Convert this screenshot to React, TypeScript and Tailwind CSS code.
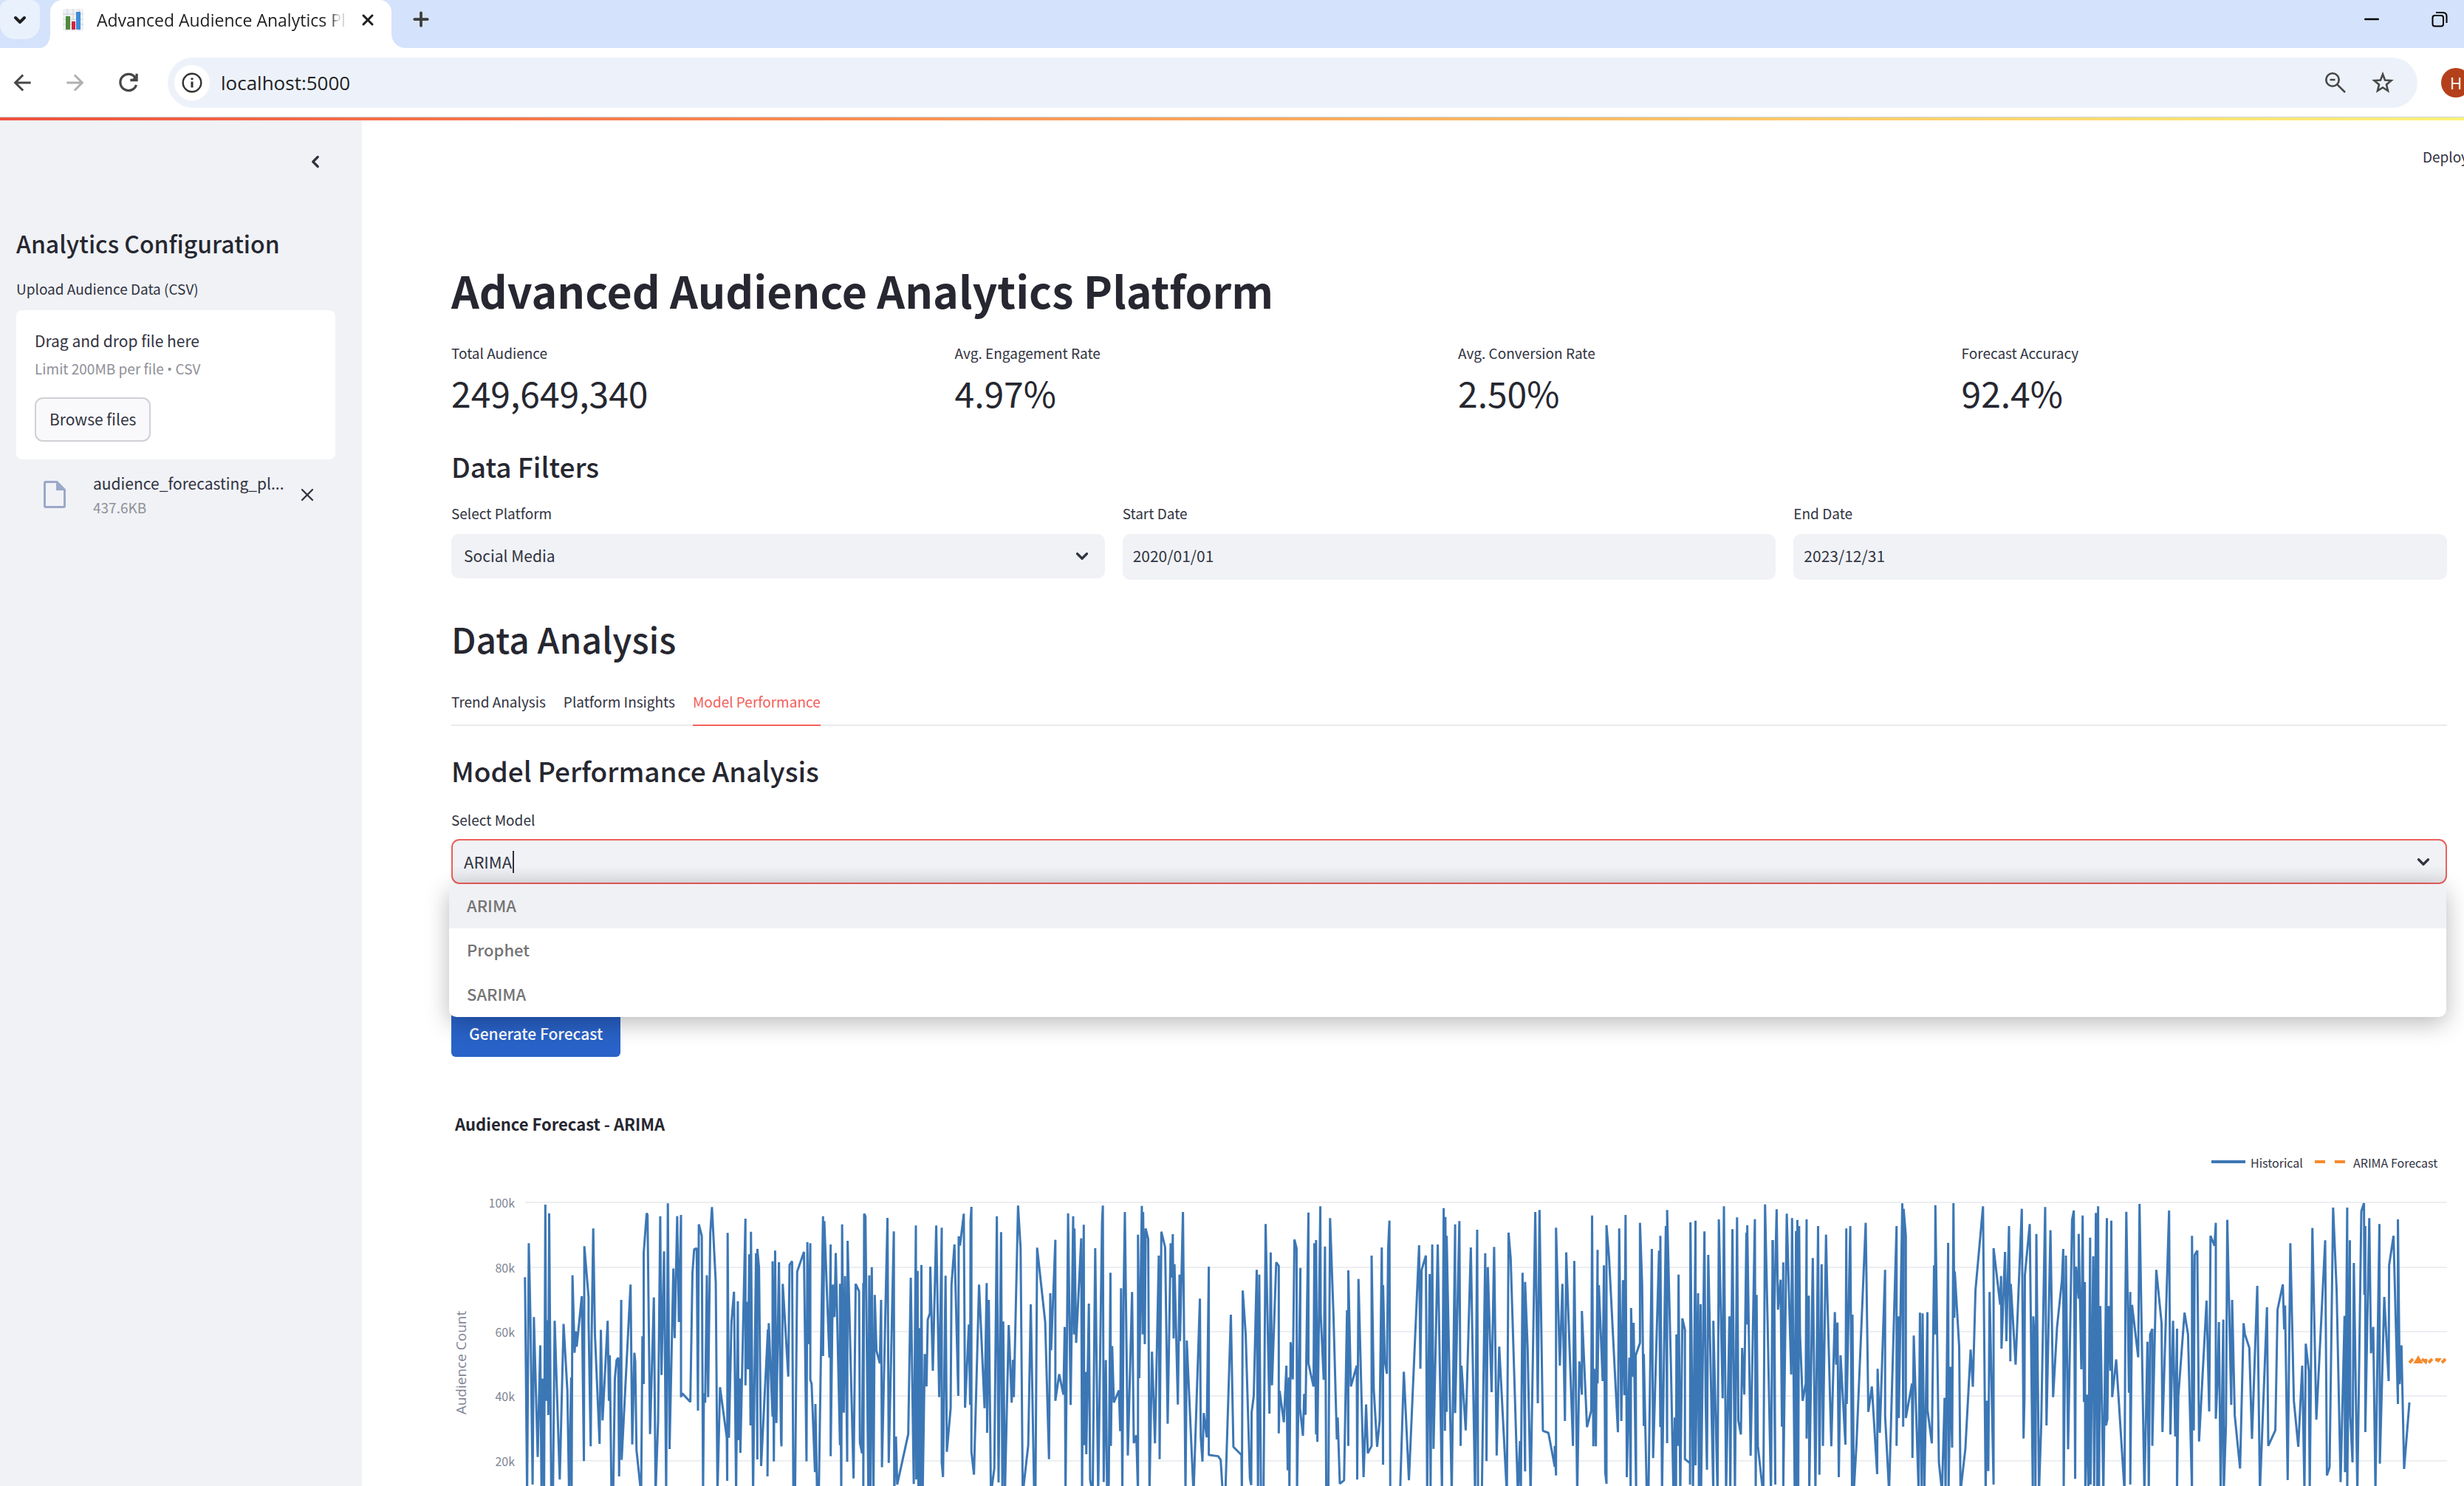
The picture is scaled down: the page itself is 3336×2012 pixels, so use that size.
import { useState } from "react";
import { ChevronDown, ChevronLeft, X, Plus, Minus } from "lucide-react";

const UI = "font-['Noto_Sans_CJK_SC',sans-serif]";
const CHROME = "font-['Open_Sans',sans-serif]";

const LABEL = "block text-[19px] leading-[28px] text-[#31333f]";

type Segment = { x: number; y: number; sx: number; points: string };

/* Historical series, digitised in three stretches with their own sample scale. */
const SEGMENTS: Segment[] = [
  {
    x: -11,
    y: -10,
    sx: 0.574,
    points:
      "193,718 198,1600 202,580 206,900 211,1560 214,880 223,1448 229,995 232,1600 234,1130 238,1600 241,423 243,1220 246,893 248,1278 250,458 255,1600 259,1600 263,895 275,1540 284,908 293,1180 297,1600 302,1125 303,1600 305,710 310,1025 313,938 315,1000 327,795 332,1465 333,592 343,800 343,900 348,1405 350,980 354,520 358,950 369,1395 372,932 376,1300 388,895 391,1220 393,1035 397,1600 401,1600 405,1130 409,1055 413,1045 415,1527 420,810 421,1460 442,748 446,1397 451,1025 453,1060 456,1420 467,1600 470,958 473,1152 473,620 480,458 482,465 488,1355 497,800 501,1600 507,1300 512,470 515,1115 521,613 526,1600 530,418 534,1416 543,683 546,965 552,470 556,900 561,465 561,1205 564,1190 583,1225 588,700 592,605 598,600 601,1260 603,503 610,550 613,1600 615,1190 618,1228 622,710 625,1205 630,540 634,433 643,740 647,1600 653,1165 669,1370 670,1545 671,538 674,1370 680,900 686,777 691,1600 695,815 697,1380 700,1130 701,1432 713,480 713,1157 716,818 719,1092 722,625 725,1320 726,533 731,1600 738,620 741,1458 741,603 745,680 750,1485 766,930 765,1527 768,905 777,1285 777,653 780,1466 783,610 786,1310 792,657 797,1380 798,1405 801,745 814,1122 817,668 823,653 826,1600 830,1600 835,695 851,615 857,1466 859,575 862,990 866,580 866,1135 869,1150 877,1510 878,1233 882,1600 886,1600 896,470 896,1038 899,490 911,1045 914,585 914,1445 919,748 923,880 926,620 936,1400 936,745 939,1600 941,503 945,1268 948,713 953,1468 954,570 968,1535 973,745 981,775 983,1390 988,1433 991,742 991,1600 993,460 996,470 1003,1600 1005,710 1008,1600 1011,677 1015,1600 1018,790 1022,1016 1030,1068 1033,810 1035,1490 1048,477 1051,1472 1063,532 1064,1600 1068,1365 1071,1560 1097,1355 1103,720 1110,1558 1115,508 1116,1540 1119,692 1121,1600 1124,925 1126,1600 1128,668 1131,1600 1136,1030 1140,1162 1143,890 1148,865 1149,675 1155,1098 1163,508 1170,1205 1176,517 1176,1470 1179,1530 1185,712 1188,1427 1197,1250 1199,750 1206,585 1215,1200 1216,552 1219,590 1228,460 1231,1248 1240,910 1243,1237 1244,490 1246,432 1246,1427 1252,1520 1264,748 1277,1250 1282,742 1283,1350 1287,810 1292,1600 1300,1495 1306,470 1310,1552 1316,535 1319,1600 1321,898 1325,1600 1334,912 1341,1228 1344,1053 1346,1205 1356,427 1362,600 1367,1600 1380,1400 1386,828 1394,1600 1397,1600 1401,598 1420,900 1429,1457 1432,783 1434,1015 1444,566 1444,1220 1453,1112 1463,1195 1466,920 1468,1600 1474,458 1480,1237 1486,470 1488,950 1489,520 1493,985 1505,560 1507,1600 1511,505 1512,1400 1515,1103 1517,1437 1523,825 1526,1540 1532,1600 1538,600 1545,1600 1554,500 1556,427 1558,1550 1563,1055 1566,1600",
  },
  {
    x: 889,
    y: 90,
    sx: 0.574,
    points:
      "0,1300 2,1255 6,400 7,1103 10,698 14,927 26,878 29,1043 31,463 34,1300 37,500 40,153 47,1142 57,478 61,1092 67,1060 71,1300 71,245 74,828 80,128 82,650 83,153 87,690 89,220 95,262 98,1300 104,720 111,1093 120,330 122,1157 126,233 135,297 141,1013 148,280 151,420 153,243 155,667 157,365 165,935 169,407 170,677 177,153 183,1300 186,675 202,1300 217,505 219,1068 223,1167 226,970 233,1068 238,375 238,1140 260,1145 266,1160 271,1300 277,1300 290,570 296,1107 315,1140 316,1300 318,472 325,650 335,1235 338,1262 339,967 344,900 351,388 354,1300 357,407 361,1300 367,1300 372,202 381,972 384,317 387,857 397,357 403,372 403,1052 405,880 415,1007 421,777 424,1202 427,825 428,1300 431,682 436,833 440,265 445,300 446,1300 454,380 453,950 460,1062 463,892 466,977 473,155 473,768 485,862 487,280 491,1057 491,267 494,1087 501,130 502,570 509,835 512,293 515,1300 520,1300 524,178 532,570 540,1077 542,988 547,1257 557,1243 564,552 567,1103 567,390 573,862 587,777 588,1240 591,425 603,1230 609,935 613,1133 622,1103 622,330 627,870 635,1107 641,1000 646,297 649,1180 649,450 653,755 658,810 661,303 664,188 666,1300 689,1300 698,802 710,1243 734,288 737,790 740,388 750,330 753,1300 759,405 761,1300 765,285 768,1115 778,285 788,1300 792,137 795,1042 796,173 799,965 799,250 811,1300 819,203 819,970 829,190 832,1103 834,777 844,1040 856,297 866,1300 871,225 873,1300 882,1300 890,320 893,1165 896,377 905,885 911,295 917,1142 923,700 941,1300 945,237 950,340 967,1300 972,1083 974,1300 978,400 984,1207 984,437 990,707 997,1300 1008,153 1014,930 1018,145 1026,1042 1039,1050 1054,1188 1054,1103 1057,1223 1057,217 1066,777 1072,445 1078,1002 1081,317 1097,1103 1100,352 1107,1300 1112,760 1118,895 1118,555 1130,1027 1140,960 1142,167 1145,1105 1147,790 1151,1105 1155,307 1155,850 1158,450 1167,840 1170,370 1173,1210 1176,1257 1176,207 1182,337 1203,1048 1206,220 1211,1002 1215,430 1218,897 1221,165 1224,1230 1230,745 1233,1300 1234,543 1238,823 1240,603 1246,1300 1245,735 1255,685 1255,197 1260,443 1264,1022 1264,730 1271,1300 1275,1300 1283,303 1286,1153 1300,310 1303,1027 1303,250 1307,1300 1316,210 1319,1092 1319,145 1328,780 1334,1300 1337,988 1340,1300 1341,650 1344,1103 1346,407 1350,1300 1355,585 1361,632 1361,1157 1373,1173 1373,1260 1374,195 1380,1300 1386,188 1386,1182 1392,483 1394,1300 1398,527 1399,1300 1407,232 1410,937 1413,1200 1416,327 1428,1300 1428,595 1438,1300 1441,183 1450,910 1453,130 1458,1300 1466,577 1468,1300 1473,223 1479,1300 1484,175 1487,1000 1493,1057 1496,705 1501,895 1506,237 1508,610 1508,207 1516,1143 1526,182 1528,1300 1530,490 1533,1103 1543,1260 1546,1300 1550,122 1556,600 1564,1300 1568,267",
  },
  {
    x: 1789,
    y: 40,
    sx: 0.597,
    points:
      "0,417 6,1410 4,685 9,292 12,700 18,578 21,1175 24,508 24,1440 32,310 42,963 44,328 50,1440 53,380 55,1440 56,335 58,1440 60,360 62,800 68,1070 75,1000 77,333 77,1223 82,643 83,1440 91,490 97,1440 103,360 106,1370 111,515 114,1253 121,395 124,640 133,1255 141,710 144,923 147,752 150,1380 154,885 165,1248 167,370 168,1083 176,360 180,1440 181,720 184,1440 190,1250 211,347 217,1115 225,1012 237,1368 238,940 243,1200 255,538 255,1130 264,1440 281,360 281,1253 285,727 286,1140 294,268 296,1175 297,290 302,400 302,1140 316,1000 317,1302 320,805 331,1440 334,712 338,1440 340,715 344,1440 351,710 351,1105 361,1243 366,520 368,800 369,275 377,1320 384,1440 390,1058 392,1440 398,428 399,1440 403,932 407,1260 410,267 412,733 413,545 423,850 426,1440 437,1265 449,862 454,1013 460,620 477,280 483,1440 486,1070 489,1355 492,628 501,1410 501,450 516,680 518,563 519,858 527,465 530,828 536,360 539,910 540,595 551,923 565,290 569,1223 571,1063 572,560 583,352 590,1440 591,727 594,822 596,1440 598,392 604,1440 609,1170 618,283 621,1170 630,377 636,1055 645,770 656,580 659,453 660,1440 665,480 670,1267 679,335 683,297 686,1387 688,525 694,655 694,392 700,942 703,317 706,1075 708,587 709,1440 713,1045 716,1440 720,407 721,1410 727,483 729,1440 733,307 736,1440 738,280 740,1440 743,685 750,1440 758,328 756,1170 759,1145 762,685 766,948 768,338 770,1055 779,902 798,1440 800,663 802,302 805,640 808,1037 811,628 811,1410 815,680 829,893 832,270 843,1440 850,830 853,1440 856,800 861,778 861,1253 870,538 882,755 884,1197 899,297 902,1207 908,745 913,1215 917,777 917,1440 920,1050 934,712 942,800 951,1440 951,400 955,1190 957,478 963,460 967,1235 984,663 990,1113 993,400 1002,440 1005,347 1005,1143 1009,985 1012,750 1016,1440 1022,740 1023,1440 1028,1167 1031,335 1040,1087 1042,660 1048,1130 1060,1345 1068,755 1071,800 1081,855 1087,1225 1099,603 1105,1440 1121,690 1124,1253 1140,1190 1145,700 1157,597 1160,780 1162,683 1168,1392 1174,430 1182,1070 1192,1257 1201,927 1206,1440 1209,838 1216,950 1218,1440 1224,368 1233,1147 1253,418 1257,1373 1263,1340 1271,285 1279,620 1288,1400 1297,725 1298,1360 1303,285 1303,1440 1309,418 1310,1130 1315,1320 1318,510 1326,1440 1335,300 1341,267 1342,640 1344,360 1344,1197 1353,328 1357,877 1362,770 1367,1440 1376,352 1377,1325 1387,648 1397,990 1398,520 1408,400 1418,1083 1418,333 1422,1003 1426,845 1432,1347 1444,1077",
  },
];

const TICKS = [
  { label: "100k", y: 128 },
  { label: "80k", y: 216 },
  { label: "60k", y: 303 },
  { label: "40k", y: 390 },
  { label: "20k", y: 478 },
  { label: "0", y: 565 },
];

const METRICS = [
  { label: "Total Audience", value: "249,649,340" },
  { label: "Avg. Engagement Rate", value: "4.97%" },
  { label: "Avg. Conversion Rate", value: "2.50%" },
  { label: "Forecast Accuracy", value: "92.4%" },
];

const TABS = ["Trend Analysis", "Platform Insights", "Model Performance"];
const MODELS = ["ARIMA", "Prophet", "SARIMA"];

function BrowserTabs() {
  return (
    <div className="flex h-[65px] items-start bg-[#d5e2fb]">
      <button
        aria-label="Search tabs"
        className="flex h-[53px] w-[54px] shrink-0 items-center justify-center rounded-b-[20px] rounded-t-[12px] bg-[#e9f1fd] text-[#1f1f1f]"
      >
        <ChevronDown size={24} strokeWidth={4} />
      </button>
      <div className="flex h-[65px] w-[14px] shrink-0 flex-col justify-end">
        <svg viewBox="0 0 20 20" className="h-5 w-full" preserveAspectRatio="none">
          <path d="M20 0V20H0C12 20 20 12 20 0Z" fill="#fff" />
        </svg>
      </div>
      <div className="flex h-[65px] w-[462px] shrink-0 items-center rounded-t-[16px] bg-white pb-3 pl-[17px] pr-[20px]">
        <svg viewBox="0 0 28 30" className="h-[30px] w-[28px] shrink-0">
          <rect x="0" y="0" width="28" height="30" rx="2" fill="#eef1f4" />
          <path d="M0 7H28M0 14H28M0 21H28M6 0V30M14 0V30M22 0V30" stroke="#ccd3da" strokeWidth="1" />
          <rect x="4" y="10" width="6" height="18" fill="#4f8a3c" />
          <rect x="12" y="17" width="5" height="11" fill="#d3263f" />
          <rect x="18" y="4" width="6" height="24" fill="#3f8cd9" />
        </svg>
        <span
          className={`ml-[18px] flex-1 overflow-hidden whitespace-nowrap bg-gradient-to-r from-[#1f1f1f] from-94% to-[#1f1f1f]/20 to-97% bg-clip-text text-[23px] leading-[32px] text-transparent ${CHROME}`}
        >
          Advanced Audience Analytics Platform
        </span>
        <button aria-label="Close tab" className="ml-[18px] shrink-0 text-[#1f1f1f]">
          <X size={24} strokeWidth={3} />
        </button>
      </div>
      <svg viewBox="0 0 20 20" className="mt-[45px] h-5 w-5 shrink-0">
        <path d="M0 0V20H20C8 20 0 12 0 0Z" fill="#fff" />
      </svg>
      <button aria-label="New tab" className="ml-1 flex h-[52px] w-[32px] shrink-0 items-center justify-center text-[#3c3c3c]">
        <Plus size={30} strokeWidth={3} />
      </button>
      <div className="ml-auto flex h-[52px] shrink-0 items-center gap-[66px] pr-[22px] text-black">
        <button aria-label="Minimize">
          <Minus size={30} strokeWidth={2} />
        </button>
        <button aria-label="Restore">
          <svg viewBox="0 0 22 22" className="h-[22px] w-[22px]" fill="none" stroke="currentColor" strokeWidth="2">
            <rect x="1.500" y="6" width="14.500" height="14.500" rx="3" />
            <path d="M6 2H15C18.500 2 20.500 4 20.500 7V16" />
          </svg>
        </button>
      </div>
    </div>
  );
}

function AddressBar() {
  return (
    <div className="flex h-[93px] items-center overflow-hidden bg-white pl-[16px]">
      <button aria-label="Back" className="shrink-0 text-[#474747]">
        <svg viewBox="0 0 24 24" className="h-[28px] w-[28px]" fill="none" stroke="currentColor" strokeWidth="2.600">
          <path d="M22 12H4M13 3L4 12L13 21" />
        </svg>
      </button>
      <button aria-label="Forward" className="ml-[44px] shrink-0 text-[#b0b0b0]">
        <svg viewBox="0 0 24 24" className="h-[28px] w-[28px]" fill="none" stroke="currentColor" strokeWidth="2.600">
          <path d="M2 12H20M11 3L20 12L11 21" />
        </svg>
      </button>
      <button aria-label="Reload" className="ml-[44px] shrink-0 text-[#474747]">
        <svg viewBox="0 0 24 24" className="h-[28px] w-[28px]" fill="none" stroke="currentColor" strokeWidth="2.800">
          <path d="M20 6.500A9.500 9.500 0 1 0 21 14.500" />
          <path d="M21.500 1.500V9H14" />
          <path d="M21 4L16.500 8.500H21Z" fill="currentColor" strokeWidth="1" />
        </svg>
      </button>
      <div className="ml-[39px] flex h-[68px] min-w-0 flex-1 items-center rounded-full bg-[#edf2fa] pl-[9px] pr-[32px]">
        <button
          aria-label="View site information"
          className="flex h-[48px] w-[48px] shrink-0 items-center justify-center rounded-full bg-white text-[#333]"
        >
          <svg viewBox="0 0 28 28" className="h-[28px] w-[28px]" fill="none" stroke="currentColor">
            <circle cx="14" cy="14" r="12.300" strokeWidth="2.400" />
            <path d="M14 12.500V20.500M14 7.500V10" strokeWidth="3" />
          </svg>
        </button>
        <input
          aria-label="Address"
          defaultValue="localhost:5000"
          className={`ml-[15px] min-w-0 flex-1 bg-transparent text-[26px] leading-[36px] text-[#1f1f1f] outline-none ${CHROME}`}
        />
        <button aria-label="Zoom" className="shrink-0 text-[#474747]">
          <svg viewBox="0 0 28 28" className="h-[28px] w-[28px]" fill="none" stroke="currentColor" strokeWidth="2.600">
            <circle cx="10" cy="10" r="8.700" />
            <path d="M16.300 16.300L27 27M6.500 10H13.500" />
          </svg>
        </button>
        <button aria-label="Bookmark this tab" className="ml-[35px] shrink-0 text-[#474747]">
          <svg viewBox="0 0 30 30" className="h-[30px] w-[30px]" fill="none" stroke="currentColor" strokeWidth="2.600">
            <path d="M15 3.500L18 11.500L26.500 12L20 17.500L22 26L15 21.500L8 26L10 17.500L3.500 12L12 11.500Z" />
          </svg>
        </button>
      </div>
      <button
        className={`-mr-[9px] ml-[32px] flex h-[40px] w-[40px] shrink-0 items-center justify-center rounded-full bg-[#b3401b] text-[22px] leading-[40px] text-white ${CHROME}`}
      >
        H
      </button>
    </div>
  );
}

function Sidebar() {
  return (
    <aside className="w-[490px] shrink-0 bg-[#f0f2f6] pl-[22px] pr-[36px]">
      <div className="flex h-[112px] items-center justify-end pr-[14px]">
        <button aria-label="Collapse sidebar" className="text-[#31333f]">
          <ChevronLeft size={26} strokeWidth={3} />
        </button>
      </div>
      <h2 className="mt-[34px] whitespace-nowrap text-[32px] font-medium leading-[40px] text-[#262730]">
        Analytics Configuration
      </h2>
      <label htmlFor="upload" className={`mt-[28px] ${LABEL}`}>
        Upload Audience Data (CSV)
      </label>
      <section className="mt-[15px] rounded-[8px] bg-white px-[25px] pb-[24px] pt-[25px]">
        <p className="text-[21px] leading-[32px] text-[#31333f]">Drag and drop file here</p>
        <p className="mt-2 text-[19px] leading-[28px] text-[#8f9098]">
          Limit 200MB per file <span className={CHROME}>•</span> CSV
        </p>
        <button
          id="upload"
          className="mt-[24px] h-[60px] rounded-[11px] border-2 border-[#d0d1d5] bg-[#f9f9fb] px-[18px] pb-[2px] text-[21px] leading-[32px] text-[#31333f]"
        >
          Browse files
        </button>
      </section>
      <div className="mt-[16px] flex items-center pl-[37px]">
        <svg viewBox="0 0 30 37" className="h-[37px] w-[30px] shrink-0">
          <path d="M3 1.500H18L28.500 12V34Q28.500 35.500 27 35.500H3Q1.500 35.500 1.500 34V3Q1.500 1.500 3 1.500Z" fill="none" stroke="#9ba8c9" strokeWidth="3" />
          <path d="M17 1L29 13H17Z" fill="#9ba8c9" />
        </svg>
        <div className="ml-[37px] min-w-0 flex-1">
          <p className="whitespace-nowrap text-[21px] leading-[32px] text-[#31333f]">audience_forecasting_pl...</p>
          <p className="mt-[3px] text-[19px] leading-[28px] text-[#8f9098]">437.6KB</p>
        </div>
        <button aria-label="Remove file" className="ml-[6px] mr-[24px] shrink-0 text-[#31333f]">
          <X size={28} strokeWidth={2} />
        </button>
      </div>
    </aside>
  );
}

function ForecastChart() {
  return (
    <svg viewBox="0 0 2702 575" className={`mt-[69px] block w-full ${UI}`} role="img" aria-label="Audience Forecast - ARIMA">
      <text x="5" y="31" className="fill-[#262730] text-[22px] font-bold">
        Audience Forecast - ARIMA
      </text>
      <path d="M2383 73H2429" stroke="#3c77b5" strokeWidth="4" />
      <text x="2436" y="81" className="fill-[#31333f] text-[16px]">
        Historical
      </text>
      <path d="M2523 73H2565" stroke="#f58a2c" strokeWidth="4" strokeDasharray="14 13" />
      <text x="2575" y="81" className="fill-[#31333f] text-[16px]">
        ARIMA Forecast
      </text>
      {TICKS.map((t) => (
        <g key={t.label}>
          <path d={`M100 ${t.y}H2702`} stroke="#eceef2" strokeWidth="2" />
          <text x="86" y={t.y + 7} textAnchor="end" className="fill-[#808495] text-[16px]">
            {t.label}
          </text>
        </g>
      ))}
      <text
        x="0"
        y="0"
        transform="translate(20 345) rotate(-90)"
        textAnchor="middle"
        className="fill-[#808495] font-['Open_Sans',sans-serif] text-[19px]"
      >
        Audience Count
      </text>
      {SEGMENTS.map((s) => (
        <polyline
          key={s.x}
          points={s.points}
          transform={`translate(${s.x} ${s.y}) scale(${s.sx} 0.3333)`}
          vectorEffect="non-scaling-stroke"
          fill="none"
          stroke="#3c77b5"
          strokeWidth="3"
          strokeLinejoin="bevel"
        />
      ))}
      <path
        d="M2651 345L2656 340M2660 344L2663 339L2666 344ZM2668 340L2673 344L2674 340M2677 345L2682 340M2686 341H2691L2689 344M2695 345L2700 340"
        fill="none"
        stroke="#f58a2c"
        strokeWidth="4"
      />
    </svg>
  );
}

export default function App() {
  const [tab, setTab] = useState(2);
  const [model, setModel] = useState("ARIMA");

  return (
    <div className={`flex h-screen flex-col overflow-hidden bg-white ${UI}`}>
      <BrowserTabs />
      <AddressBar />
      <div className="h-[5px] shrink-0 border-t border-[#c9d3d8] bg-gradient-to-r from-[#f0503f] to-[#fff27a]" />
      <div className="flex min-h-0 flex-1">
        <Sidebar />
        <main className="min-w-0 flex-1 overflow-hidden">
          <header className="flex h-[98px] items-center justify-end overflow-hidden">
            <button className="-mr-[6px] whitespace-nowrap text-[19px] leading-[28px] text-[#31333f]">Deploy</button>
          </header>
          <div className="pl-[121px] pr-[23px] pt-[96px]">
            <h1 className="text-[59px] font-bold leading-[72px] text-[#262730]">Advanced Audience Analytics Platform</h1>
            <div className="mt-[35px] grid grid-cols-4 gap-6">
              {METRICS.map((m) => (
                <div key={m.label}>
                  <p className={LABEL}>{m.label}</p>
                  <p className="mt-[7px] text-[48px] leading-[64px] text-[#262730]">{m.value}</p>
                </div>
              ))}
            </div>

            <h3 className="mt-[46px] text-[37px] font-medium leading-[44px] text-[#262730]">Data Filters</h3>
            <div className="mt-[28px] grid grid-cols-3 gap-6">
              <div>
                <label htmlFor="platform" className={LABEL}>
                  Select Platform
                </label>
                <div className="relative mt-[14px]">
                  <select
                    id="platform"
                    className="h-[60px] w-full appearance-none rounded-[10px] bg-[#f0f2f6] px-[17px] pb-[2px] text-[21px] leading-[32px] text-[#31333f]"
                  >
                    <option>Social Media</option>
                  </select>
                  <ChevronDown size={26} strokeWidth={3} className="pointer-events-none absolute inset-y-0 right-[18px] my-auto text-[#31333f]" />
                </div>
              </div>
              <div>
                <label htmlFor="start" className={LABEL}>
                  Start Date
                </label>
                <input
                  id="start"
                  defaultValue="2020/01/01"
                  className="mt-[14px] block h-[62px] w-full rounded-[10px] bg-[#f0f2f6] px-[14px] pb-[4px] text-[21px] leading-[32px] text-[#31333f]"
                />
              </div>
              <div>
                <label htmlFor="end" className={LABEL}>
                  End Date
                </label>
                <input
                  id="end"
                  defaultValue="2023/12/31"
                  className="mt-[14px] block h-[62px] w-full rounded-[10px] bg-[#f0f2f6] px-[14px] pb-[4px] text-[21px] leading-[32px] text-[#31333f]"
                />
              </div>
            </div>

            <h2 className="mt-[51px] text-[48px] font-medium leading-[56px] text-[#262730]">Data Analysis</h2>
            <div role="tablist" className="mt-[44px] flex gap-6 border-b-2 border-[#e9eaee]">
              {TABS.map((t, i) => (
                <button
                  key={t}
                  role="tab"
                  aria-selected={i === tab}
                  onClick={() => setTab(i)}
                  className={
                    i === tab
                      ? "-mb-[2px] border-b-2 border-[#f4605b] pb-[17px] text-[19px] leading-[28px] text-[#f4605b]"
                      : "-mb-[2px] border-b-2 border-transparent pb-[17px] text-[19px] leading-[28px] text-[#31333f]"
                  }
                >
                  {t}
                </button>
              ))}
            </div>

            <h3 className="mt-[38px] text-[37px] font-medium leading-[44px] text-[#262730]">Model Performance Analysis</h3>
            <label htmlFor="model" className={`mt-[31px] ${LABEL}`}>
              Select Model
            </label>
            <div className="relative mt-[12px]">
              <div className="flex h-[61px] items-center rounded-[11px] border-2 border-[#ec5f5c] bg-[#f0f2f6] bg-gradient-to-b from-transparent from-60% to-black/5 pl-[15px] pr-[17px]">
                <input
                  id="model"
                  role="combobox"
                  aria-expanded="true"
                  aria-controls="models"
                  value={model}
                  onChange={(e) => setModel(e.target.value)}
                  className="field-sizing-content bg-transparent pb-[2px] text-[22px] leading-[32px] text-[#31333f] outline-none"
                />
                <span className="ml-[1px] h-[30px] w-[2px] bg-[#31333f]" />
                <ChevronDown size={26} strokeWidth={3} className="ml-auto text-[#31333f]" />
              </div>
              <ul
                id="models"
                role="listbox"
                aria-label="Select Model"
                className="absolute -left-[3px] right-[1px] top-full overflow-hidden rounded-[10px] bg-white shadow-[0_8px_32px_rgba(0,0,0,0.28)]"
              >
                {MODELS.map((m) => (
                  <li
                    key={m}
                    role="option"
                    aria-selected={m === model}
                    onClick={() => setModel(m)}
                    className={
                      m === model
                        ? "h-[60px] bg-[#f0f1f4] px-6 text-[22px] font-medium leading-[56px] text-[#747474]"
                        : "h-[60px] px-6 text-[22px] font-medium leading-[56px] text-[#747474]"
                    }
                  >
                    {m}
                  </li>
                ))}
              </ul>
            </div>

            <button className="mt-[174px] block h-[60px] rounded-[6px] bg-[#2962c8] px-6 pb-[4px] text-[21px] font-medium leading-[32px] text-white">
              Generate Forecast
            </button>
            <ForecastChart />
          </div>
        </main>
      </div>
    </div>
  );
}
